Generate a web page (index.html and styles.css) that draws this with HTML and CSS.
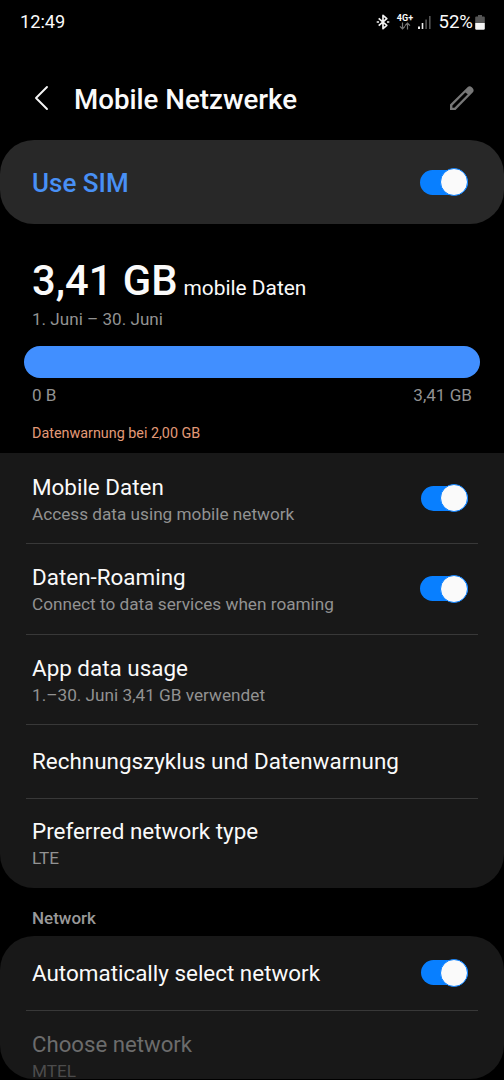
FILE: index.html
```html
<!DOCTYPE html>
<html lang="de">
<head>
<meta charset="utf-8">
<title>Mobile Netzwerke</title>
<link rel="stylesheet" href="styles.css">
</head>
<body>
<div class="screen">
  <div class="status">
    <span class="clock">12:49</span>
    <div class="status-right">
      <svg class="bt" width="14" height="16" viewBox="0 0 14 16" fill="none" stroke="#f2f2f2" stroke-width="1.7" stroke-linejoin="round"><path d="M2.700 4.300 10.800 11.300 7 14.600V1.400l3.800 3.300L2.700 11.700M.7 8h2.300M11 8h2.300"/></svg>
      <div class="lte"><span class="lte-label">4G+</span>
        <svg width="12" height="8" viewBox="0 0 12 8" fill="none" stroke="#777" stroke-width="1.2"><path d="M3.500.5v6M1 4.300l2.500 2.500L6 4.300M8.500 7.500v-6M6 3.700l2.500-2.500L11 3.700"/></svg>
      </div>
      <svg class="signal" width="14" height="13" viewBox="0 0 14 13"><path fill="#eee" d="M0 10.500h2V13H0zM3.700 7h1.600v6H3.700z"/><path fill="#555" d="M7.300 3.500h1.600V13H7.300zM11 0h1.600v13H11z"/></svg>
      <span class="percent">52%</span>
      <svg class="battery" width="10" height="15" viewBox="0 0 10 15"><path fill="#555" d="M3 0h4v1.500h1.800q1 0 1 1V8H.2V2.500q0-1 1-1H3z"/><path fill="#f5f5f5" d="M.2 8h9.600v5.500q0 1.200-1.200 1.200H1.400Q.2 14.700.2 13.500z"/></svg>
    </div>
  </div>
  <header class="header">
    <svg class="back" width="16" height="26" viewBox="0 0 16 26" fill="none" stroke="#f5f5f5" stroke-width="1.900" stroke-linecap="round" stroke-linejoin="round"><path d="M13 2 2 13l11 11"/></svg>
    <h1 class="title">Mobile Netzwerke</h1>
    <svg class="edit" width="26" height="26" viewBox="0 0 26 26"><path fill="#777" fill-rule="evenodd" d="M1 25v-5.500L18.800 1.900q1.800-1.700 4.300.5 2.600 2.600.8 4.800L6.500 25zM3.400 22.800h2L18.800 9.300l-2.500-1.700L3.400 20.600z"/></svg>
  </header>
  <section class="sim"><span class="sim-label">Use SIM</span><span class="switch wide"><i class="knob"></i></span></section>
  <section class="usage">
    <div class="amount"><span class="big">3,41 GB</span><span class="unit">mobile Daten</span></div>
    <div class="period">1. Juni – 30. Juni</div>
    <div class="bar"></div>
    <div class="scale"><span>0 B</span><span>3,41 GB</span></div>
    <div class="warning">Datenwarnung bei 2,00 GB</div>
  </section>
  <section class="card first">
    <div class="row"><div class="copy"><div class="name">Mobile Daten</div><div class="sub">Access data using mobile network</div></div><span class="switch"><i class="knob"></i></span></div>
    <div class="row"><div class="copy"><div class="name">Daten-Roaming</div><div class="sub">Connect to data services when roaming</div></div><span class="switch wide"><i class="knob"></i></span></div>
    <div class="row"><div class="copy"><div class="name">App data usage</div><div class="sub">1.–30. Juni 3,41 GB verwendet</div></div></div>
    <div class="row single"><div class="copy"><div class="name">Rechnungszyklus und Datenwarnung</div></div></div>
    <div class="row"><div class="copy"><div class="name">Preferred network type</div><div class="sub">LTE</div></div></div>
  </section>
  <h2 class="group">Network</h2>
  <section class="card second">
    <div class="row single"><div class="copy"><div class="name">Automatically select network</div></div><span class="switch"><i class="knob"></i></span></div>
    <div class="row disabled"><div class="copy"><div class="name">Choose network</div><div class="sub">MTEL</div></div></div>
  </section>
</div>
</body>
</html>
```
FILE: styles.css
```css
* { box-sizing: border-box; }
body { margin: 0; background: #000; color: #fafafa; font-family: Roboto, sans-serif; overflow: hidden; }
.screen { width: 504px; height: 1080px; overflow: hidden; display: flex; flex-direction: column; white-space: nowrap; }
.screen > * { flex-shrink: 0; }
svg { display: block; flex-shrink: 0; }
.status { height: 44px; padding: 0 19px 0 20px; display: flex; justify-content: space-between; align-items: center; }
.clock { font-size: 18.2px; line-height: 22px; }
.status-right { display: flex; align-items: center; }
.bt { margin-right: 6px; }
.lte { width: 17px; display: flex; flex-direction: column; align-items: center; margin-right: 5px; }
.lte-label { font-size: 9px; line-height: 8px; font-weight: 700; }
.signal { margin: 0 6px 0 0; }
.percent { font-size: 18.6px; line-height: 22px; margin-right: 2px; }
.header { height: 96px; padding: 13px 29px 0 32px; display: flex; align-items: center; }
.back { margin: -2px 24px 0 2px; }
.title { margin: 0; padding-top: 2px; font-size: 27.7px; font-weight: 500; line-height: 34px; flex: 1; }
.edit { margin-top: -2px; }
.sim { height: 84px; padding: 0 36px 0 32px; border-radius: 34px; background: #282828; display: flex; align-items: center; justify-content: space-between; }
.sim-label { font-size: 26px; font-weight: 500; line-height: 30px; color: #4890f5; padding-top: 2px; }
.switch { width: 47px; height: 25px; border-radius: 13px; background: #087fff; display: flex; align-items: center; justify-content: flex-end; flex-shrink: 0; }
.switch.wide { width: 48px; }
.knob { display: block; width: 28px; height: 28px; flex-shrink: 0; border-radius: 50%; background: #fafafa; border: 1px solid #087fff; }
.usage { height: 229px; padding: 32px 24px 0; }
.amount { display: flex; align-items: baseline; padding-left: 8px; height: 50px; line-height: 50px; }
.big { font-size: 41.7px; font-weight: 500; margin-right: 6px; }
.unit { font-size: 20.9px; }
.period { font-size: 17.1px; line-height: 22px; height: 40px; padding: 2px 8px 0; color: #929292; }
.bar { height: 32px; border-radius: 16px; background: #418fff; }
.scale { display: flex; justify-content: space-between; padding: 6px 8px 0; font-size: 17.1px; line-height: 22px; color: #929292; }
.warning { padding: 19px 8px 0; font-size: 14.35px; line-height: 18px; color: #e39a78; }
.card { background: #181818; }
.first { height: 435px; border-radius: 0 0 34px 34px; }
.second { height: 143px; border-radius: 34px; overflow: hidden; }
.row { height: 90.5px; margin: 0 26px; padding: 0 10px 0 6px; display: flex; align-items: center; justify-content: space-between; border-bottom: 1px solid #383838; }
.row:first-child { height: 91px; }
.row.single { height: 73.5px; }
.row.single:first-child { height: 74.5px; }
.row:last-child { border: 0; }
.copy { padding-top: 4px; }
.single .copy { padding-top: 2px; }
.row:last-child .copy { padding-top: 2px; }
.name { font-size: 22.43px; line-height: 26px; margin-bottom: 2px; }
.sub { font-size: 17.2px; line-height: 25px; color: #929292; }
.group { height: 48px; margin: 0; padding: 19px 32px 0; font-size: 17px; font-weight: 500; line-height: 22px; color: #999; }
.disabled .name { color: #6c6c6c; font-size: 22.2px; }
.disabled .sub { color: #4c4c4c; line-height: 24px; }
```
